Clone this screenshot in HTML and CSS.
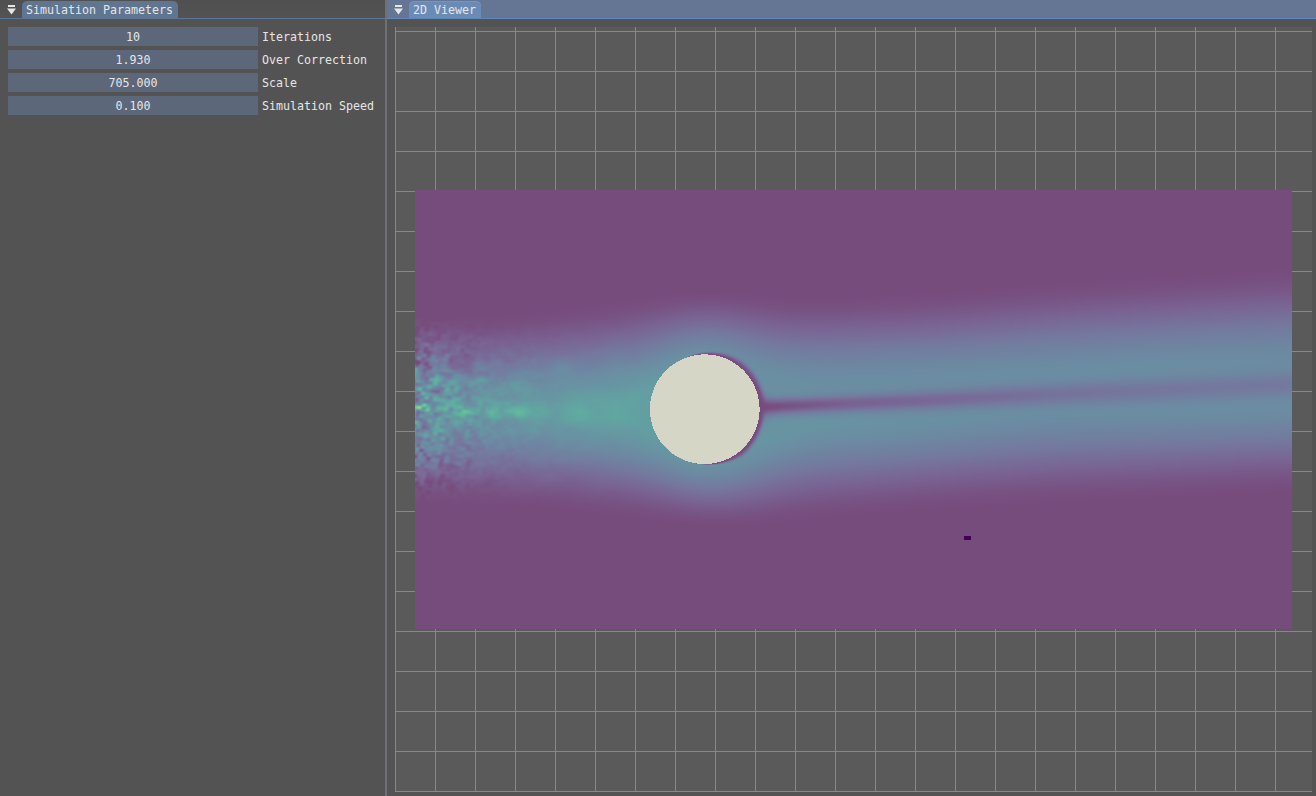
FILE: index.html
```
<!DOCTYPE html>
<html lang="en">
<head>
<meta charset="utf-8">
<title>Fluid Simulation</title>
<link rel="stylesheet" href="styles.css">
</head>
<body>
<div class="dock">
  <section class="panel params">
    <header class="titlebar">
      <svg class="menu" width="9" height="10" viewBox="0 0 9 10"><path d="M1 0h7v2H1zM0 3.5h9L4.5 9.5z"/></svg>
      <span class="tab">Simulation Parameters</span>
    </header>
    <div class="rows">
      <div class="row"><div class="slider">10</div><label>Iterations</label></div>
      <div class="row"><div class="slider">1.930</div><label>Over Correction</label></div>
      <div class="row"><div class="slider">705.000</div><label>Scale</label></div>
      <div class="row"><div class="slider">0.100</div><label>Simulation Speed</label></div>
    </div>
  </section>
  <div class="splitter"></div>
  <section class="panel viewer">
    <header class="titlebar">
      <svg class="menu" width="9" height="10" viewBox="0 0 9 10"><path d="M1 0h7v2H1zM0 3.5h9L4.5 9.5z"/></svg>
      <span class="tab">2D Viewer</span>
    </header>
    <div class="grid"><canvas id="field" width="877" height="439"></canvas></div>
  </section>
</div>
<script src="field.js"></script>
</body>
</html>
```
FILE: styles.css
```
* { box-sizing: border-box; }
body {
  margin: 0;
  background: #535353;
  color: #e6e6e6;
  font: 11.63px/13px "DejaVu Sans Mono", monospace;
  overflow: hidden;
}
.dock { display: flex; width: 1316px; height: 796px; }
.panel { display: flex; flex-direction: column; }
.params { width: 385px; }
.splitter { width: 2px; background: #6f6f78; }
.viewer { flex: 1; }
.titlebar {
  display: flex;
  align-items: flex-end;
  height: 19px;
  padding-left: 7px;
  border-bottom: 1px solid #5d7698;
  background: linear-gradient(#505050, #535353);
}
.menu { margin: 0 6px 3px 0; fill: #e6e6e6; }
.tab {
  height: 17px;
  padding: 3px 4px 0;
  border-radius: 5px 5px 0 0;
  background: #60758f;
  width: 156px;
  white-space: nowrap;
}
.viewer .titlebar { background: #647694; border-color: #6186bb; }
.viewer .tab { width: 72px; background: #6b8bb7; box-shadow: inset 0 1px #6f96cb; }
.rows { display: flex; flex-direction: column; gap: 4px; padding: 8px; }
.row { display: flex; align-items: center; gap: 4px; height: 19px; white-space: nowrap; }
.slider {
  width: 250px;
  height: 19px;
  padding-top: 4px;
  background: #5d677a;
  text-align: center;
}
.row label { padding-top: 2px; }
.grid {
  width: 917px;
  height: 765px;
  margin: 8px 0 0 8px;
  padding: 163px 0 0 20px;
  background-color: #5a5a5a;
  background-image:
    linear-gradient(90deg, #888 1px, transparent 1px),
    linear-gradient(#888 1px, transparent 1px);
  background-size: 40px 40px;
  background-position: 0 0, 0 4px;
}
.grid canvas { display: block; }
```
FILE: field.js
```
// Velocity magnitude field of the flow around a cylinder.
const W = 877, H = 439, OX = 415, OY = 190;
const ctx = document.getElementById('field').getContext('2d');
const img = ctx.createImageData(W, H);

const stops = [[68,1,84],[72,36,117],[65,68,135],[53,95,141],[42,120,142],[33,145,140],[34,168,132],[68,191,112],[122,209,81],[189,223,38],[253,231,37]];
const solid = [214, 214, 198];
const haze = [208, 210, 198];

// x, top edge, top peak, top value, bottom peak, bottom value, bottom edge
const keys = [
  [415, 316, 407, .38, 411, .38, 503],
  [480, 315, 407, .41, 411, .41, 505],
  [550, 310, 408, .44, 412, .44, 509],
  [620, 299, 407, .47, 413, .47, 518],
  [660, 292, 385, .42, 437, .42, 523],
  [705, 289, 356, .38, 463, .40, 527],
  [760, 292, 374, .34, 443, .375, 527],
  [800, 297, 377, .325, 425, .375, 521],
  [925, 291, 376, .325, 420, .35, 511],
  [1050, 281, 370, .33, 411, .335, 504],
  [1170, 274, 364, .33, 409, .335, 499],
  [1291, 266, 359, .32, 407, .33, 493]
];
// x, wake centre, wake depth, wake width
const wakes = [[755,407,1,11],[775,406,.98,8],[800,405,.88,8],[850,403,.74,8.5],[925,400,.64,9.5],[1050,394,.48,11],[1170,389,.40,12],[1291,384,.36,12]];

function lookup(table, x) {
  let i = 0;
  while (i < table.length - 2 && x > table[i + 1][0]) i++;
  const a = table[i], b = table[i + 1];
  const f = Math.min(1, Math.max(0, (x - a[0]) / (b[0] - a[0])));
  return a.map((v, k) => v + (b[k] - v) * f);
}
// Averages neighbouring lookups so the profile has no kinks along x.
function smoothLookup(x) {
  const sum = [0, 0, 0, 0, 0, 0, 0];
  for (let d = -30; d <= 30; d += 5)
    lookup(keys, x + d).forEach((v, k) => { sum[k] += v / 13; });
  return sum;
}
const profiles = Array.from({ length: W }, (_, i) => smoothLookup(i + OX));

function hash(i, j, s) {
  let h = Math.imul(i, 374761393) + Math.imul(j, 668265263) + Math.imul(s, 1274126177) | 0;
  h = Math.imul(h ^ h >>> 13, 1274126177);
  return ((h ^ h >>> 16) >>> 0) / 2147483648 - 1;
}
function noise(x, y, s) {
  const i = Math.floor(x), j = Math.floor(y);
  let u = x - i, v = y - j;
  u = u * u * (3 - 2 * u); v = v * v * (3 - 2 * v);
  const a = hash(i, j, s), b = hash(i + 1, j, s), c = hash(i, j + 1, s), d = hash(i + 1, j + 1, s);
  return (a + (b - a) * u) * (1 - v) + (c + (d - c) * u) * v;
}
const blobs = [[420,406,5,3,.3],[423,410,5,2,.2],[440,409,6,3,.18],[463,411,8,7,.14],[493,413,8,6,.16],[517,412,9,6,.18],[540,412,14,7,.05],[578,412,12,10,.06],[615,412,12,12,.02],[516,383,12,9,.06],[562,367,12,9,.06],[438,380,6,4,.14],[455,382,8,8,.12],[480,379,7,5,.08],[472,357,9,4,-.04]];

// Near-linear falloff from the jet core with a rounded crest and foot.
function shape(u) {
  if (u >= 1) return 0;
  const s = 1 - u;
  return .5 * (.5 + .5 * Math.cos(Math.PI * u)) + .5 * s * s / (s + .2) * 1.2;
}

function value(x, y) {
  const [, te, tp, tv, bp, bv, be] = profiles[x - OX];
  let t;
  if (y < tp) t = tv * shape((tp - y) / (tp - te));
  else if (y > bp) t = bv * shape((y - bp) / (be - bp));
  else t = tv + (bv - tv) * (y - tp) / (bp - tp);

  if (x < 640) {
    const e = Math.pow(Math.min(1, t / .4), .65);
    const d = x - 415;
    t += e * (noise(x / 4.6 + y / 17, y / 3.8 - x / 23, 1) * .3 * Math.exp(-d / 42)
      + noise(x / 9 - y / 21, y / 7 + x / 29, 2) * .14 * Math.exp(-d / 65)
      + noise(x / 22, y / 12, 3) * .05 * Math.exp(-d / 170));
    for (const [bx, by, sx, sy, a] of blobs)
      t += a * Math.exp(-(((x - bx) / sx) ** 2) - ((y - by) / sy) ** 2);
  }
  const dx = x - 704.5, dy = y - 409, r = Math.hypot(dx, dy);
  if (x > 750) {
    const [, c, depth, w] = lookup(wakes, x);
    t *= 1 - depth * Math.exp(-(((y - c) / w) ** 2)) * Math.min(1, (x - 750) / 10);
  }
  // Boundary layer on the lee side of the cylinder.
  if (dx > -18) {
    const a = Math.max(0, Math.min(1, (dx + 18) / 55));
    const thick = dy < 0 ? .8 + 5.2 * a : .1 + 4.8 * a * a;
    t *= 1 - Math.exp(-Math.pow(Math.max(0, r - 54.5) / thick, 3));
  }
  return Math.max(0, Math.min(1, t));
}

for (let y = 0; y < H; y++) for (let x = 0; x < W; x++) {
  const px = x + OX, py = y + OY, k = (y * W + x) * 4;
  const inside = Math.hypot(px + .5 - 704.75, py + .5 - 409.2) < 54.8;
  const t = value(px, py) * 10, i = Math.min(9, Math.floor(t));
  for (let c = 0; c < 3; c++) {
    const v = stops[i][c] + (stops[i + 1][c] - stops[i][c]) * (t - i);
    img.data[k + c] = inside ? solid[c] : v * .64 + haze[c] * .36;
  }
  img.data[k + 3] = 255;
}
ctx.putImageData(img, 0, 0);
ctx.fillStyle = '#440154';
ctx.fillRect(549, 346, 7, 4);
```
